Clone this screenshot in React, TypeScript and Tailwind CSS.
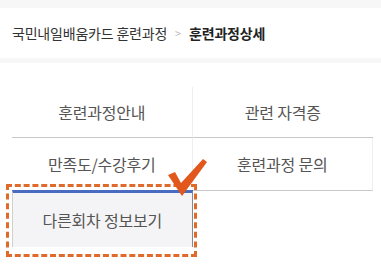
import React from 'react';

const font = { fontFamily: '"Noto Sans CJK KR", "Noto Sans", sans-serif' };

export default function App() {
  return (
    <div className="w-[381px] h-[268px] bg-white overflow-hidden relative" style={font}>
      <div className="h-[8px] bg-[#f7f7f7]" />
      <div className="h-[50px] flex items-center pl-[12px] text-[14px] tracking-[-0.2px]">
        <span className="text-[#333]">국민내일배움카드 훈련과정</span>
        <span className="mx-[8px] text-[#bbb] text-[11px]">&gt;</span>
        <span className="text-[#222] font-bold">훈련과정상세</span>
      </div>
      <div className="h-[5px] bg-[#f7f7f7]" />

      <div className="ml-[12px] mt-[24px] w-[361px] grid grid-cols-2 text-[16px] text-[#555] tracking-[-0.2px]">
        <div className="h-[51px] flex items-center justify-center border-b border-[#c8c8c8] border-r border-r-[#eeeeee]">
          훈련과정안내
        </div>
        <div className="h-[51px] flex items-center justify-center border-b border-[#c8c8c8]">
          관련 자격증
        </div>
        <div className="h-[53px] flex items-center justify-center border-b border-[#c8c8c8] border-r border-r-[#eeeeee]">
          만족도/수강후기
        </div>
        <div className="h-[53px] flex items-center justify-center border-b border-[#c8c8c8] border-r border-r-[#eeeeee]">
          훈련과정 문의
        </div>
        <div className="h-[57px] flex items-center justify-center bg-[#f4f4f6] border-t-[3px] border-t-[#4a6cc0] border-l border-l-[#d0d0d0] border-r border-r-[#888] -mt-[1px]">
          다른회차 정보보기
        </div>
      </div>

      <div className="absolute left-[6px] top-[184px] w-[191px] h-[73px] border-[3px] border-dashed border-[#e06a2b]" />

      <svg className="absolute left-[166px] top-[155px]" width="42" height="44" viewBox="0 0 42 44">
        <path d="M2 20 L9 17 L15 28 L37 4 L41 7 L16 41 Z" fill="#e2571c" />
      </svg>
    </div>
  );
}
